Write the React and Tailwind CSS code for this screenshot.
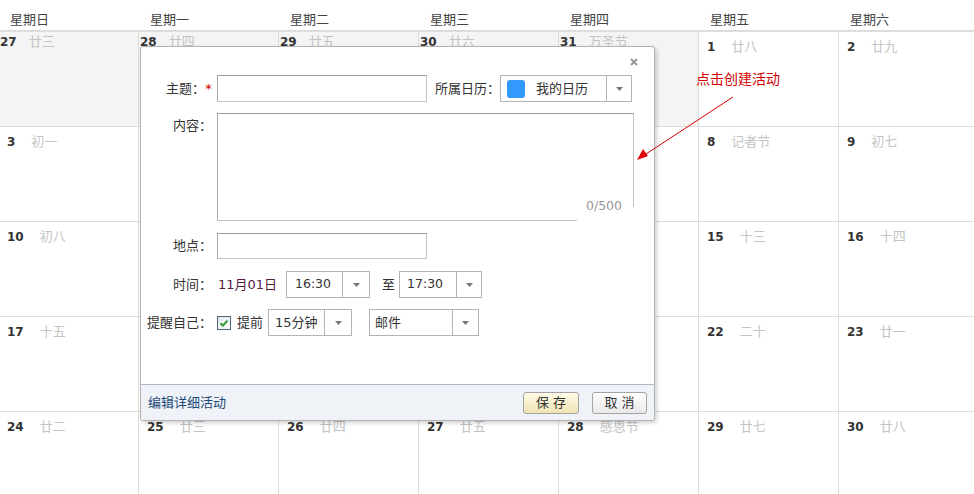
const weekDays = ["星期日", "星期一", "星期二", "星期三", "星期四", "星期五", "星期六"];

const weeks = [
  [["27", "廿三", true], ["28", "廿四", true], ["29", "廿五", true], ["30", "廿六", true], ["31", "万圣节", true], ["1", "廿八"], ["2", "廿九"]],
  [["3", "初一"], ["4", "初二"], ["5", "初三"], ["6", "初四"], ["7", "立冬"], ["8", "记者节"], ["9", "初七"]],
  [["10", "初八"], ["11", "初九"], ["12", "初十"], ["13", "十一"], ["14", "十二"], ["15", "十三"], ["16", "十四"]],
  [["17", "十五"], ["18", "十六"], ["19", "十七"], ["20", "十八"], ["21", "十九"], ["22", "二十"], ["23", "廿一"]],
  [["24", "廿二"], ["25", "廿三"], ["26", "廿四"], ["27", "廿五"], ["28", "感恩节"], ["29", "廿七"], ["30", "廿八"]],
];

function Arrow() {
  return (
    <svg width="7" height="4" viewBox="0 0 7 4">
      <path d="M0 0h7L3.5 4z" fill="#777" />
    </svg>
  );
}

function Select({ className, arrowClass, children }) {
  return (
    <div className={`flex h-[27px] border border-[#b4b4b4] bg-white ${className}`}>
      <div className="flex flex-1 items-center overflow-hidden whitespace-nowrap">{children}</div>
      <div className={`flex items-center justify-center border-l border-[#b4b4b4] ${arrowClass}`}>
        <Arrow />
      </div>
    </div>
  );
}

function Label({ children, top }) {
  return (
    <div className={`w-[71px] shrink-0 text-right leading-4 text-[#333] ${top ? "self-start pt-[5px]" : ""}`}>
      {children}
    </div>
  );
}

function EventDialog() {
  return (
    <div className="absolute left-[140px] top-[46px] flex h-[375px] w-[515px] flex-col rounded-[3px] border border-[#b3b3b3] bg-white shadow-[2px_2px_4px_rgba(0,0,0,0.18)]">
      {/* close */}
      <div className="absolute right-[16px] top-[11px]">
        <svg width="8" height="8" viewBox="0 0 8 8">
          <path d="M1 1l6 6M7 1l-6 6" stroke="#999" strokeWidth="2" />
        </svg>
      </div>

      <div className="pt-[28px] text-[13px]">
        {/* subject */}
        <div className="flex items-center">
          <Label>
            主题：<span className="inline-block w-[7px] text-center text-[#c00]">*</span>
          </Label>
          <div className="ml-[5px] h-[27px] w-[210px] border border-[#c4c4c4] border-t-[#999] border-l-[#aaa]" />
          <div className="ml-[8px] leading-4 text-[#333]">所属日历：</div>
          <Select className="w-[132px]" arrowClass="w-[25px]">
            <div className="ml-[6px] h-[18px] w-[18px] rounded-[3px] bg-[#3399ff]" />
            <span className="ml-[11px] text-[#333]">我的日历</span>
          </Select>
        </div>

        {/* content */}
        <div className="mt-[11px] flex">
          <Label top>内容：</Label>
          <div className="relative ml-[5px] h-[108px] w-[417px] border border-[#c4c4c4] border-t-[#999] border-l-[#aaa]">
            <div className="absolute bottom-[-1px] right-[-1px] h-[14px] w-[57px] bg-white" />
            <div className="absolute bottom-[6px] right-[11px] font-[family-name:'DejaVu_Sans',sans-serif] text-[12.5px] leading-4 text-[#999]">
              0/500
            </div>
          </div>
        </div>

        {/* location */}
        <div className="mt-[12px] flex items-center">
          <Label>地点：</Label>
          <div className="ml-[5px] h-[26px] w-[210px] border border-[#c4c4c4] border-t-[#999] border-l-[#aaa]" />
        </div>

        {/* time */}
        <div className="mt-[12px] flex items-center">
          <Label>时间：</Label>
          <div className="ml-[6px] w-[68px] leading-4 text-[#552040]">11月01日</div>
          <Select className="w-[84px]" arrowClass="w-[27px]">
            <span className="pl-[8px] font-[family-name:'DejaVu_Sans',sans-serif] text-[12.5px] text-[#333]">16:30</span>
          </Select>
          <div className="ml-[12px] leading-4 text-[#333]">至</div>
          <Select className="ml-[4px] w-[83px]" arrowClass="w-[25px]">
            <span className="pl-[7px] font-[family-name:'DejaVu_Sans',sans-serif] text-[12.5px] text-[#333]">17:30</span>
          </Select>
        </div>

        {/* reminder */}
        <div className="mt-[11px] flex items-center">
          <Label>提醒自己：</Label>
          <svg className="ml-[5px]" width="14" height="14" viewBox="0 0 14 14">
            <defs>
              <linearGradient id="cb" x1="0" y1="0" x2="1" y2="1">
                <stop offset="0" stopColor="#dfe6ea" />
                <stop offset="1" stopColor="#ffffff" />
              </linearGradient>
            </defs>
            <rect x="0.5" y="0.5" width="13" height="13" fill="url(#cb)" stroke="#4f6676" />
            <path d="M3.5 7.2l2.4 2.4 4.6-5" fill="none" stroke="#2e9a2e" strokeWidth="2" />
          </svg>
          <div className="ml-[6px] leading-4 text-[#333]">提前</div>
          <Select className="ml-[5px] w-[84px]" arrowClass="w-[27px]">
            <span className="pl-[6px] text-[#333]">15分钟</span>
          </Select>
          <Select className="ml-[17px] w-[110px]" arrowClass="w-[26px]">
            <span className="pl-[5px] text-[#333]">邮件</span>
          </Select>
        </div>
      </div>

      {/* footer */}
      <div className="mt-auto flex h-[36px] items-center rounded-b-[3px] border-t border-[#aeb8c4] bg-[#eff2f7] pl-[7px] pr-[7px] text-[13px]">
        <a className="leading-4 text-[#1b4a78]">编辑详细活动</a>
        <button className="ml-auto h-[22px] w-[56px] rounded-[3px] border border-[#a3a3a3] bg-gradient-to-b from-[#fffbe6] to-[#efe4b4] leading-4 text-[#333]">
          保 存
        </button>
        <button className="ml-[13px] h-[22px] w-[55px] rounded-[3px] border border-[#a3a3a3] bg-gradient-to-b from-[#ffffff] to-[#e9e9e9] leading-4 text-[#333]">
          取 消
        </button>
      </div>
    </div>
  );
}

export default function App() {
  return (
    <div className="relative h-[494px] w-[974px] overflow-hidden bg-white font-[family-name:'DejaVu_Sans','Noto_Sans_CJK_SC',sans-serif] text-[13px]">
      {/* week header */}
      <div className="ml-[-2px] grid h-[32px] grid-cols-[repeat(7,140px)] border-b-2 border-[#dddddd]">
        {weekDays.map((d) => (
          <div key={d} className="flex items-end pb-[3px] pl-[12px] font-[family-name:'Noto_Sans_CJK_SC',sans-serif] leading-4 text-[#444]">
            {d}
          </div>
        ))}
      </div>

      {/* month grid */}
      <div className="ml-[-2px] grid grid-cols-[repeat(7,140px)]">
        {weeks.map((week, wi) =>
          week.map(([day, lunar, prev], di) => (
            <div
              key={wi + "-" + di}
              className={`h-[95px] border-b border-l border-[#dddddd] leading-[14px] ${
                prev ? "bg-[#f4f4f4] pl-[1px] pt-[2px]" : "pl-[8px] pt-[7px]"
              }`}
            >
              <span className="text-[12px] font-bold text-[#333]">{day}</span>
              <span className={`font-[family-name:'Noto_Sans_CJK_SC',sans-serif] text-[13px] text-[#c4c4c4] ${prev ? "ml-3" : "ml-4"}`}>
                {lunar}
              </span>
            </div>
          ))
        )}
      </div>

      <EventDialog />

      {/* annotation */}
      <div className="absolute left-[696px] top-[69px] font-[family-name:'Noto_Sans_CJK_SC',sans-serif] text-[14px] leading-[18px] text-[#d40000]">
        点击创建活动
      </div>
      <svg className="pointer-events-none absolute left-0 top-0" width="974" height="494">
        <line x1="733" y1="97" x2="646" y2="154" stroke="#d40000" strokeWidth="1" />
        <path d="M637 160l6-11 5 7z" fill="#e00000" />
      </svg>
    </div>
  );
}
